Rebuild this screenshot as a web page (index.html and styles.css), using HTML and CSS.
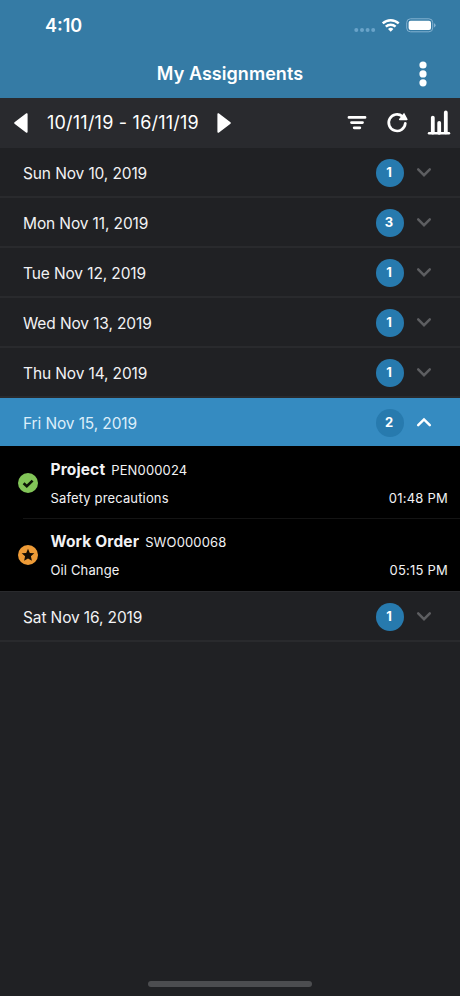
FILE: index.html
```html
<!DOCTYPE html>
<html lang="en">
<head>
    <meta charset="UTF-8">
    <meta name="viewport" content="width=device-width, initial-scale=1.0">
    <title>My Assignments</title>
    <link rel="stylesheet" href="styles.css">
</head>
<body>
    <header>
        <div class="status-bar">
            <span class="clock">4:10</span>
            <svg class="status-icons" width="84" height="18" viewBox="0 0 84 18">
                <g fill="#69a3c9">
                    <circle cx="4.3" cy="13" r="2"/>
                    <circle cx="10" cy="13" r="2"/>
                    <circle cx="15.6" cy="13" r="2"/>
                    <circle cx="21.2" cy="13" r="2"/>
                </g>
                <g fill="none" stroke="#fff" stroke-width="2.4">
                    <path d="M30.7 6.4a11.6 11.6 0 0 1 16 0"/>
                    <path d="M33.8 9.7a7.2 7.2 0 0 1 9.8 0"/>
                </g>
                <path d="M38.7 14.8l-2.7-2.8a3.9 3.9 0 0 1 5.4 0z" fill="#fff"/>
                <rect x="54.7" y="1.8" width="26" height="13" rx="3.8" fill="none" stroke="#84b2d1"/>
                <rect x="56.6" y="3.7" width="22.4" height="9.2" rx="2" fill="#fff"/>
                <path d="M82 6.2q1.6.6 1.6 2.1T82 10.4z" fill="#84b2d1"/>
            </svg>
        </div>
        <div class="title-bar">
            <h1>My Assignments</h1>
            <svg class="more" width="8" height="26" viewBox="0 0 8 26" fill="#fff">
                <circle cx="4" cy="4" r="3.6"/>
                <circle cx="4" cy="12.9" r="3.6"/>
                <circle cx="4" cy="21.8" r="3.6"/>
            </svg>
        </div>
    </header>

    <nav class="toolbar">
        <svg width="14" height="20" viewBox="0 0 14 20"><path d="M12.8 1v18L1 10z" fill="#fff" stroke="#fff" stroke-width="1.6" stroke-linejoin="round"/></svg>
        <span class="range">10/11/19 - 16/11/19</span>
        <svg width="14" height="20" viewBox="0 0 14 20"><path d="M1.2 1v18L13 10z" fill="#fff" stroke="#fff" stroke-width="1.6" stroke-linejoin="round"/></svg>
        <div class="tools">
            <svg width="20" height="24" viewBox="0 0 20 24" fill="none" stroke="#fff" stroke-width="2.8" stroke-linecap="round">
                <path d="M2 6.4h16M4.5 11.6h11M7.2 16.8h5.6"/>
            </svg>
            <svg width="22" height="24" viewBox="0 0 22 24">
                <path d="M19.3 12.4a8.3 8.3 0 1 1-2.8-7" fill="none" stroke="#fff" stroke-width="2.7" stroke-linecap="round"/>
                <path d="M18.1 1.8l3.4 6.2a.8.8 0 0 1-.7 1.2h-7.2a.8.8 0 0 1-.5-1.3z" fill="#fff"/>
            </svg>
            <svg width="24" height="26" viewBox="0 0 24 26" fill="none" stroke="#fff" stroke-linecap="round">
                <path d="M2 23.2h20" stroke-width="2.4"/>
                <path d="M5.8 7.6v15M12.2 12.8v10M18.8 2.4v20" stroke-width="3.8"/>
            </svg>
        </div>
    </nav>

    <main>
        <div class="day">
            <span class="date">Sun Nov 10, 2019</span>
            <span class="count">1</span>
            <svg class="chevron" width="16" height="12" viewBox="0 0 16 12"><path d="M2.2 2.4L8 8.2 13.8 2.4"/></svg>
        </div>
        <div class="day">
            <span class="date">Mon Nov 11, 2019</span>
            <span class="count">3</span>
            <svg class="chevron" width="16" height="12" viewBox="0 0 16 12"><path d="M2.2 2.4L8 8.2 13.8 2.4"/></svg>
        </div>
        <div class="day">
            <span class="date">Tue Nov 12, 2019</span>
            <span class="count">1</span>
            <svg class="chevron" width="16" height="12" viewBox="0 0 16 12"><path d="M2.2 2.4L8 8.2 13.8 2.4"/></svg>
        </div>
        <div class="day">
            <span class="date">Wed Nov 13, 2019</span>
            <span class="count">1</span>
            <svg class="chevron" width="16" height="12" viewBox="0 0 16 12"><path d="M2.2 2.4L8 8.2 13.8 2.4"/></svg>
        </div>
        <div class="day">
            <span class="date">Thu Nov 14, 2019</span>
            <span class="count">1</span>
            <svg class="chevron" width="16" height="12" viewBox="0 0 16 12"><path d="M2.2 2.4L8 8.2 13.8 2.4"/></svg>
        </div>
        <div class="day open">
            <span class="date">Fri Nov 15, 2019</span>
            <span class="count">2</span>
            <svg class="chevron" width="16" height="12" viewBox="0 0 16 12"><path d="M2.2 8.2L8 2.4 13.8 8.2"/></svg>
        </div>
        <div class="tasks">
            <div class="task">
                <svg class="state" width="20" height="20" viewBox="0 0 20 20">
                    <circle cx="10" cy="10" r="10" fill="#82c558"/>
                    <path d="M5.6 10.2l3.2 3 5.8-5.6" fill="none" stroke="#0c1406" stroke-width="2.6"/>
                </svg>
                <div class="info">
                    <div class="line"><b class="kind">Project</b><span class="code">PEN000024</span></div>
                    <div class="line"><span class="desc">Safety precautions</span><span class="time">01:48 PM</span></div>
                </div>
            </div>
            <div class="task">
                <svg class="state" width="20" height="20" viewBox="0 0 20 20">
                    <circle cx="10" cy="10" r="10" fill="#ee9b37"/>
                    <path d="M10 3.8l1.8 4.1 4.5.4-3.4 3 1 4.4-3.9-2.3-3.9 2.3 1-4.4-3.4-3 4.5-.4z" fill="#140c04"/>
                </svg>
                <div class="info">
                    <div class="line"><b class="kind">Work Order</b><span class="code">SWO000068</span></div>
                    <div class="line"><span class="desc">Oil Change</span><span class="time">05:15 PM</span></div>
                </div>
            </div>
        </div>
        <div class="day">
            <span class="date">Sat Nov 16, 2019</span>
            <span class="count">1</span>
            <svg class="chevron" width="16" height="12" viewBox="0 0 16 12"><path d="M2.2 2.4L8 8.2 13.8 2.4"/></svg>
        </div>
    </main>

    <footer>
        <div class="home-bar"></div>
    </footer>
</body>
</html>
```
FILE: styles.css
```css
* {
    box-sizing: border-box;
}
body {
    display: flex;
    flex-direction: column;
    height: 996px;
    margin: 0;
    font-family: Inter, "Liberation Sans", sans-serif;
    background-color: #202124;
    color: #f2f2f4;
    overflow: hidden;
}
svg {
    display: block;
    flex: none;
}
header {
    height: 98px;
    background-color: #357ba5;
    color: #fff;
}
.status-bar {
    display: flex;
    align-items: center;
    justify-content: space-between;
    height: 50px;
    padding: 1px 24px 0 45px;
}
.clock {
    font-size: 18px;
    font-weight: 600;
}
.title-bar {
    display: grid;
    grid-template-columns: 36px 1fr 36px;
    align-items: center;
    height: 48px;
}
h1 {
    grid-column: 2;
    margin: 0;
    padding-bottom: 2px;
    text-align: center;
    font-size: 18px;
    font-weight: 600;
    letter-spacing: 0.05px;
}
.more {
    margin-left: -5px;
}
.toolbar {
    display: flex;
    align-items: center;
    height: 50px;
    padding: 0 9px 0 14px;
    background-color: #292a2e;
    color: #fff;
}
.range {
    width: 152px;
    margin: 0 18px 2px 19px;
    font-size: 18px;
    letter-spacing: 0.22px;
    white-space: nowrap;
}
.tools {
    display: flex;
    align-items: center;
    gap: 19px;
    margin-left: auto;
}
.day {
    display: flex;
    align-items: center;
    height: 50px;
    padding: 2px 28px 0 23px;
    border-bottom: 2px solid #292a2d;
}
.date {
    flex: 1;
    font-size: 15.5px;
    letter-spacing: -0.12px;
}
.count {
    width: 28px;
    height: 28px;
    padding-right: 2px;
    border-radius: 50%;
    background-color: #277aae;
    color: #fff;
    font-size: 13px;
    font-weight: 700;
    line-height: 26px;
    text-align: center;
}
.chevron {
    margin-left: 12px;
    fill: none;
    stroke: #5d5e61;
    stroke-width: 2.5;
    stroke-linecap: round;
}
.open {
    height: 48px;
    border-bottom: none;
    background-color: #358bc1;
    color: #dceefa;
}
.open .chevron {
    stroke: #fff;
}
.tasks {
    padding-bottom: 1px;
    background-color: #000;
    border-bottom: 1px solid #292a2d;
}
.task {
    display: flex;
    align-items: center;
    height: 72px;
    padding: 2px 12px 0 18px;
}
/* divider starts a little in from the left edge */
.task + .task {
    background: linear-gradient(#141414, #141414) 23px 0 / 100% 1px no-repeat;
}
.info {
    flex: 1;
    margin-left: 12.5px;
    padding-top: 2px;
}
.line {
    display: flex;
    align-items: baseline;
    height: 28px;
    line-height: 28px;
    font-size: 13px;
    letter-spacing: 0.14px;
}
.kind {
    margin-right: 6px;
    font-size: 15.5px;
}
.time {
    margin-left: auto;
    letter-spacing: 0.22px;
}
footer {
    display: flex;
    justify-content: center;
    margin-top: auto;
    padding-bottom: 9px;
}
.home-bar {
    width: 164px;
    height: 6px;
    border-radius: 3px;
    background-color: #4c4d50;
}
```
